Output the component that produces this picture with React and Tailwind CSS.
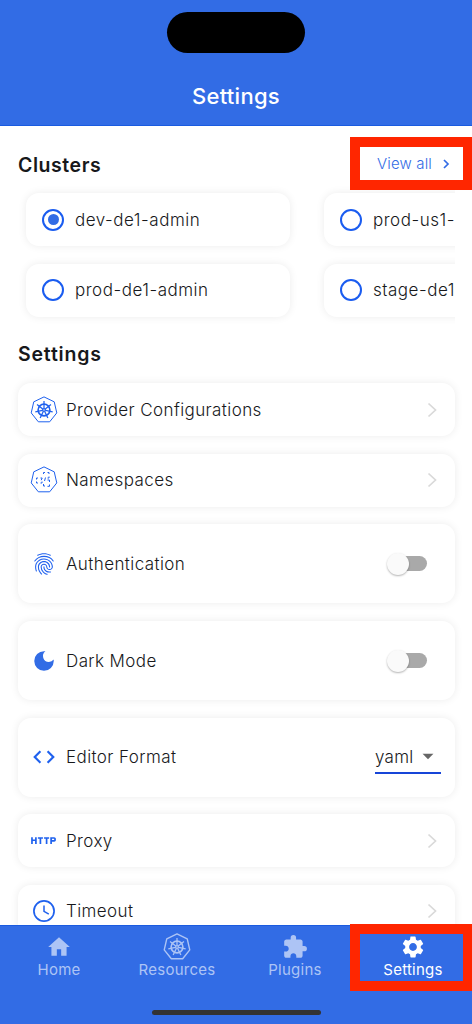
import React from "react";
import {
  MdHome,
  MdExtension,
  MdSettings,
  MdFingerprint,
  MdDarkMode,
  MdCode,
  MdHttp,
  MdArrowDropDown,
} from "react-icons/md";

const polar = (r, i) => {
  const a = (i * 2 * Math.PI) / 7 - Math.PI / 2;
  return [(14 + r * Math.cos(a)).toFixed(2), (14 + r * Math.sin(a)).toFixed(2)];
};
const seven = [0, 1, 2, 3, 4, 5, 6];
const heptagon = seven.map((i) => polar(13.1, i).join(",")).join(" ");

function WheelIcon({ bold = false }) {
  return (
    <svg viewBox="0 0 28 28" className="size-7" fill="none" stroke="currentColor" strokeLinejoin="round">
      <polygon points={heptagon} strokeWidth={bold ? 1.4 : 1} />
      <circle cx="14" cy="14" r="5.9" strokeWidth="1.600" />
      <circle cx="14" cy="14" r="1.4" strokeWidth="1.3" />
      {seven.map((i) => {
        const [x1, y1] = polar(1.6, i);
        const [x2, y2] = polar(8.9, i);
        return <line key={i} x1={x1} y1={y1} x2={x2} y2={y2} strokeWidth="1.25" />;
      })}
    </svg>
  );
}

function NamespaceIcon() {
  return (
    <svg viewBox="0 0 28 28" className="size-7" fill="none" stroke="currentColor" strokeWidth="1">
      <polygon points={heptagon} strokeLinejoin="round" />
      <path d="M13.500 8V6.500H15M17.500 6.500H19V8M19 10.500V12H17.500M6.500 13.500V12H8M6.500 15.500V17H8M10.500 17H12V15.500M10.500 12H12.200L11.200 14.200M15.500 11.500L14.500 15M13.500 18V20H15M17.500 20.300H19.500V18.500M17.500 14H19.500V16" strokeWidth="1" />
    </svg>
  );
}

function ClockIcon() {
  return (
    <svg viewBox="0 0 28 28" className="size-7" fill="none" stroke="currentColor" strokeWidth="1.700">
      <circle cx="14" cy="14" r="10.100" />
      <path d="M14 8.500V14.400L18.800 17.200" strokeWidth="1.500" />
    </svg>
  );
}

function Chevron() {
  return (
    <svg viewBox="0 0 10 16" className="mr-[17.500px] h-4 w-2.5" fill="none" stroke="#d9d9d9" strokeWidth="1.7">
      <path d="M1.500 1.500L8.500 8L1.500 14.500" />
    </svg>
  );
}

const shadow = "shadow-[0_0_8px_rgba(0,0,0,0.08)]";

function Cluster({ name, checked }) {
  return (
    <div className={`flex h-[53px] w-[264px] shrink-0 items-center rounded-[13px] bg-white pl-4 ${shadow}`}>
      <span className="flex size-[22px] items-center justify-center rounded-full border-2 border-[#1a5cf0]">
        {checked && <span className="size-[11px] rounded-full bg-[#326ce5]" />}
      </span>
      <span className="ml-[11px] whitespace-nowrap pt-0.5 text-[17px] font-[350] tracking-[0.52px]">{name}</span>
    </div>
  );
}

function Row({ icon, label, tall, children }) {
  return (
    <div className={`flex shrink-0 items-center rounded-[13px] bg-white pl-3 ${tall ? "h-[79.400px]" : "h-[53px]"} ${shadow}`}>
      <span className="flex size-7 items-center justify-center text-[#1f61ee]">{icon}</span>
      <span className="ml-[8.500px] flex-1 pt-[1.500px] text-[17px] font-[350] tracking-[0.4px]">{label}</span>
      {children || <Chevron />}
    </div>
  );
}

function Toggle() {
  return (
    <span className="mr-[28px] flex h-[15px] w-[36px] items-center rounded-full bg-[#a9a9a9]">
      <span className="-ml-[3.500px] size-[22px] shrink-0 rounded-full bg-[#fafafa] shadow-[0_1px_2px_rgba(0,0,0,0.3)]" />
    </span>
  );
}

function Tab({ icon, label, active }) {
  return (
    <div className={`flex flex-1 flex-col items-center ${active ? "text-white" : "text-[#adc4f5]"}`}>
      <span className="flex h-7 items-center">{icon}</span>
      <span className="mt-[-0.500px] text-[15px] leading-[18px] tracking-[0.25px]">{label}</span>
    </div>
  );
}

export default function App() {
  return (
    <div className="relative flex h-[1024px] w-[472px] flex-col overflow-hidden bg-white font-['Inter',sans-serif] text-[#17181b]">
      <header className="flex h-[126px] shrink-0 flex-col items-center border-b border-[#1a5be0] bg-[#326ce5] pt-3">
        <div className="h-[41px] w-[138px] rounded-full bg-black" />
        <h1 className="mt-[27px] text-[22px] font-medium leading-8 tracking-[0.25px] text-white">Settings</h1>
      </header>

      <main className="flex min-h-0 flex-1 flex-col overflow-hidden">
        <div className="flex h-[60px] shrink-0 items-center justify-between pl-[18px] pr-[22px] pt-4">
          <h2 className="pt-[3px] text-[19.500px] font-semibold tracking-[0.55px]">Clusters</h2>
          <div className="flex items-center text-[15px] font-[350] tracking-[0.15px] text-[#326ce5]">
            View all
            <svg viewBox="0 0 8 10" className="ml-2.5 h-2.5 w-2" fill="none" stroke="currentColor" strokeWidth="1.7">
              <path d="M2 1L6 5L2 9" />
            </svg>
          </div>
        </div>
        <div className="mr-[17px] flex h-[144px] shrink-0 gap-[34px] overflow-hidden pl-[26px] pt-[7px]">
          <div className="flex flex-col gap-[17.500px]">
            <Cluster name="dev-de1-admin" checked />
            <Cluster name="prod-de1-admin" />
          </div>
          <div className="flex flex-col gap-[17.500px]">
            <Cluster name="prod-us1-" />
            <Cluster name="stage-de1" />
          </div>
        </div>
        <h2 className="mt-[10px] h-7 shrink-0 pl-[18px] text-[19.500px] font-semibold leading-7 tracking-[0.8px]">Settings</h2>
        <div className="mt-[15.300px] flex flex-col gap-[17.400px] px-[17.500px]">
          <Row icon={<WheelIcon />} label="Provider Configurations" />
          <Row icon={<NamespaceIcon />} label="Namespaces" />
          <Row icon={<MdFingerprint className="size-[26px]" />} label="Authentication" tall>
            <Toggle />
          </Row>
          <Row icon={<MdDarkMode className="size-[26px] text-[#326ce5]" />} label="Dark Mode" tall>
            <Toggle />
          </Row>
          <Row icon={<MdCode className="size-[26px]" />} label="Editor Format" tall>
            <div className="mr-[13.500px] flex h-[34px] w-[66px] items-center justify-between border-b-2 border-[#1745d8]">
              <span className="pt-0.5 text-[17px] font-[350] tracking-[0.25px]">yaml</span>
              <MdArrowDropDown className="size-[26px] shrink-0 text-[#666]" />
            </div>
          </Row>
          <Row icon={<MdHttp className="size-[27px]" />} label="Proxy" />
          <Row icon={<ClockIcon />} label="Timeout" />
        </div>
      </main>

      <nav className="flex h-[99px] shrink-0 flex-col justify-between border-t border-[#1a5be0] bg-[#326ce5] pt-[7px]">
        <div className="flex">
          <Tab icon={<MdHome className="size-[26px]" />} label="Home" />
          <Tab icon={<WheelIcon bold />} label="Resources" />
          <Tab icon={<MdExtension className="size-[26px]" />} label="Plugins" />
          <Tab icon={<MdSettings className="size-[26px]" />} label="Settings" active />
        </div>
        <div className="mb-[9px] h-[5px] w-[169px] self-center rounded-full bg-[#333]" />
      </nav>

      <div className="absolute left-[350px] top-[137px] h-[53px] w-[123px] border-[10px] border-[#ff2600]" />
      <div className="absolute left-[350px] top-[924px] h-[67px] w-[123px] border-[10px] border-[#ff2600]" />
    </div>
  );
}
